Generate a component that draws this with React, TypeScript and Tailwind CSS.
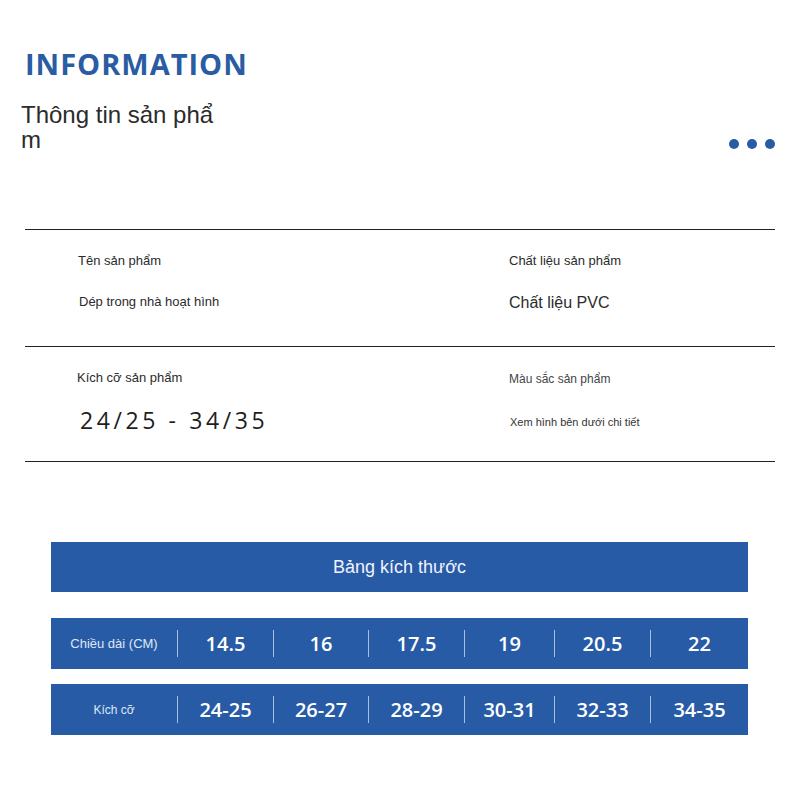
const blue = "bg-[#285ba6]";

const lengths = ["14.5", "16", "17.5", "19", "20.5", "22"];
const sizes = ["24-25", "26-27", "28-29", "30-31", "32-33", "34-35"];

function SizeRow({ label, values, labelClass }: { label: string; values: string[]; labelClass: string }) {
  return (
    <div className={`grid h-[51px] w-[697px] grid-cols-[126px_96px_95px_96px_90px_96px_1fr] items-center ${blue}`}>
      <div className={`text-center font-['Liberation_Sans',sans-serif] text-[#dfe8f6] ${labelClass}`}>{label}</div>
      {values.map((v) => (
        <div key={v} className="flex h-[27px] items-center justify-center border-l border-[#a9bfdf]">
          <span className="font-['Open_Sans',sans-serif] text-[20px] font-semibold text-white">{v}</span>
        </div>
      ))}
    </div>
  );
}

export default function App() {
  return (
    <div className="h-[800px] w-[800px] overflow-hidden bg-white">
      {/* header */}
      <div className="px-[25px] pt-[44px]">
        <h1 className="font-['Open_Sans',sans-serif] text-[29px] leading-[40px] font-bold tracking-[1px] text-[#2a5ca3]">
          INFORMATION
        </h1>
        <div className="mt-[18px] flex items-end justify-between">
          <p className="-ml-[4px] font-['Liberation_Sans',sans-serif] text-[24px] leading-[25px] text-[#2b2b2b]">
            Thông tin sản phẩ
            <br />m
          </p>
          <div className="mb-[3px] flex gap-[8px]">
            <span className="h-[10px] w-[10px] rounded-full bg-[#2a5ca3]" />
            <span className="h-[10px] w-[10px] rounded-full bg-[#2a5ca3]" />
            <span className="h-[10px] w-[10px] rounded-full bg-[#2a5ca3]" />
          </div>
        </div>
      </div>

      {/* info rows */}
      <div className="mx-[25px] mt-[77px] font-['Liberation_Sans',sans-serif] text-[#2b2b2b]">
        <div className="grid h-[117px] grid-cols-[484px_1fr] border-t border-[#1d261d]">
          <div className="pt-[23px] pl-[53px]">
            <div className="h-[16px] text-[13px] leading-[16px]">Tên sản phẩm</div>
            <div className="mt-[23px] flex h-[20px] items-center pl-[1px] text-[13px]">Dép trong nhà hoạt hình</div>
          </div>
          <div className="pt-[23px]">
            <div className="h-[16px] text-[13px] leading-[16px]">Chất liệu sản phẩm</div>
            <div className="mt-[24px] flex h-[20px] items-center text-[16px]">Chất liệu PVC</div>
          </div>
        </div>
        <div className="grid h-[116px] grid-cols-[484px_1fr] border-y border-[#1d261d]">
          <div className="pt-[23px] pl-[52px]">
            <div className="h-[16px] text-[13px] leading-[16px]">Kích cỡ sản phẩm</div>
            <div className="mt-[20px] flex h-[28px] items-center pl-[3px] font-['Open_Sans',sans-serif] text-[23px] tracking-[3.6px] text-[#1e1e1e]">
              24/25 - 34/35
            </div>
          </div>
          <div className="pt-[24px]">
            <div className="h-[16px] text-[12px] leading-[16px] text-[#444]">Màu sắc sản phẩm</div>
            <div className="mt-[25px] flex h-[20px] items-center pl-[1px] text-[11px] text-[#333]">Xem hình bên dưới chi tiết</div>
          </div>
        </div>
      </div>

      {/* size table */}
      <div className="mx-[51px] mt-[80px] flex flex-col">
        <div className={`flex h-[50px] w-[697px] items-center justify-center ${blue}`}>
          <span className="font-['Liberation_Sans',sans-serif] text-[18px] text-[#eef3fb]">Bảng kích thước</span>
        </div>
        <div className="mt-[26px]">
          <SizeRow label="Chiều dài (CM)" values={lengths} labelClass="text-[13px]" />
        </div>
        <div className="mt-[15px]">
          <SizeRow label="Kích cỡ" values={sizes} labelClass="text-[12px]" />
        </div>
      </div>
    </div>
  );
}
